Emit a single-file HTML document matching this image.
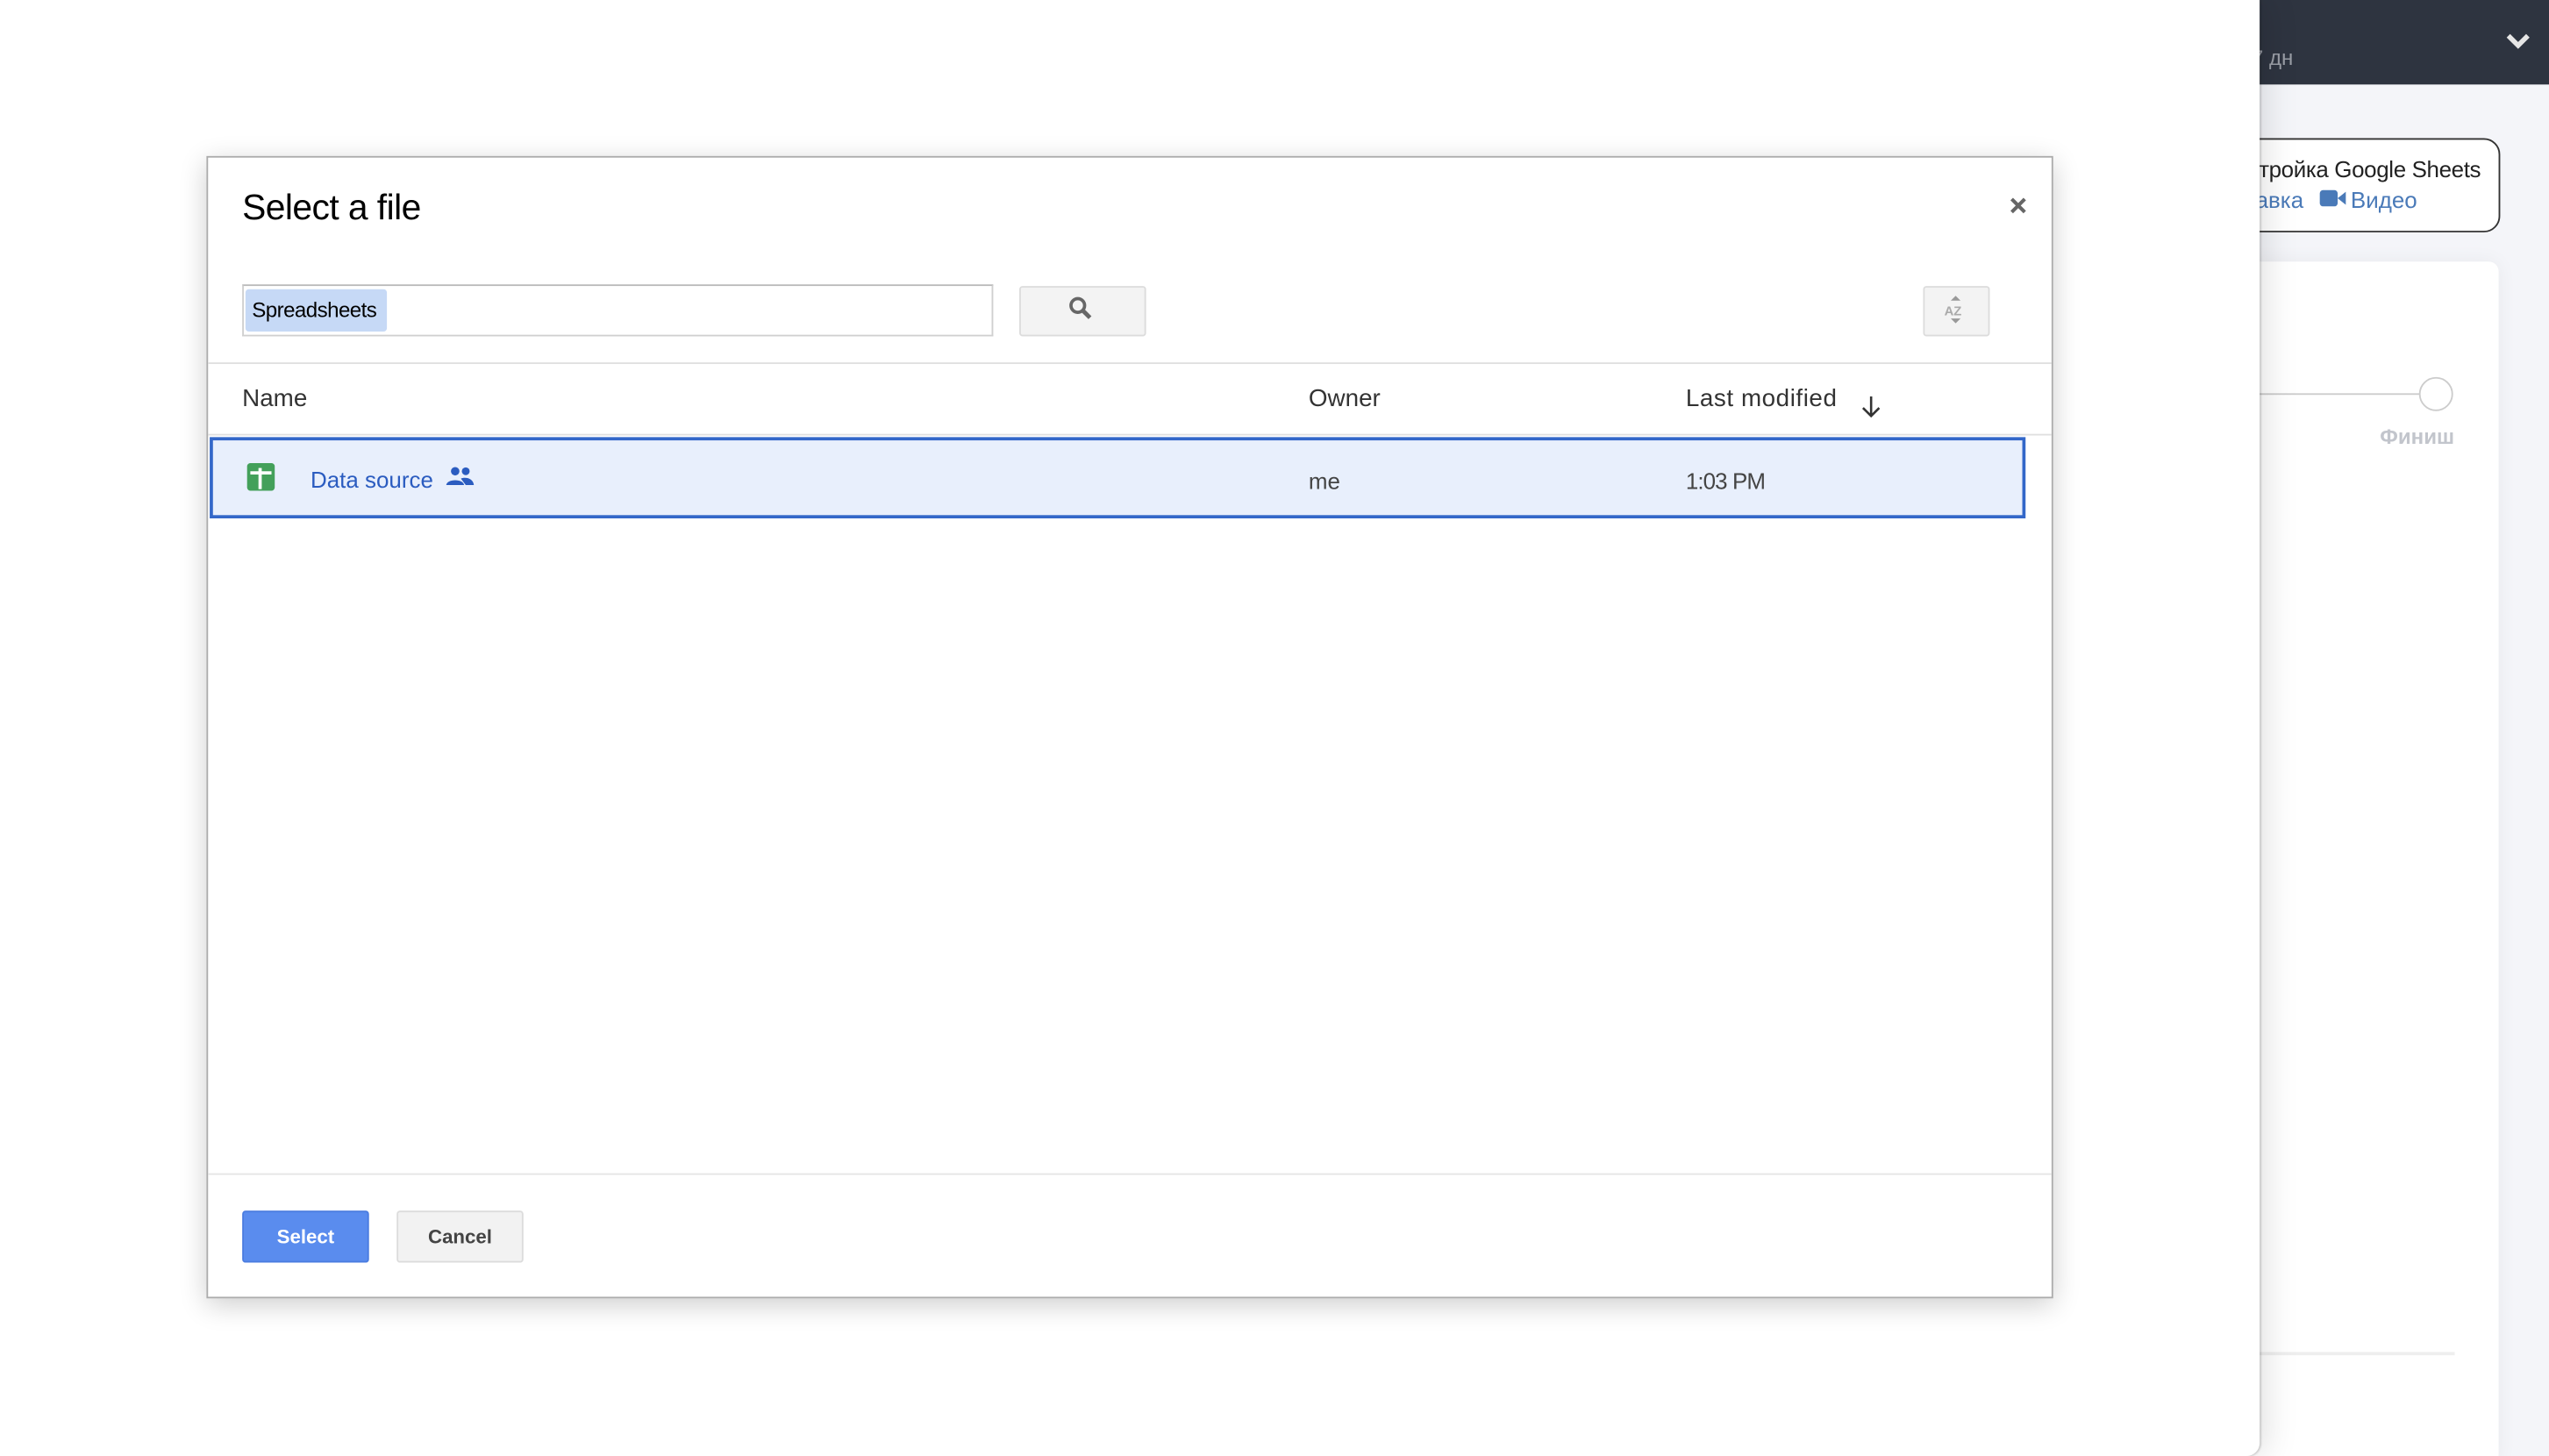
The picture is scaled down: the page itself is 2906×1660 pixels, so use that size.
<!DOCTYPE html>
<html><head><meta charset="utf-8">
<style>
html,body{margin:0;padding:0;width:2906px;height:1660px;overflow:hidden;background:#fff;}
#s{position:absolute;left:0;top:0;width:1568px;height:896px;transform:scale(1.85332,1.85268);transform-origin:0 0;font-family:"Liberation Sans",Arial,sans-serif;overflow:hidden;}
.a{position:absolute;}
</style></head><body><div id="s">
<!-- right panel -->
<div class="a" style="left:1300px;top:0;width:268px;height:896px;background:#f4f5f9;"></div>
<div class="a" style="left:1300px;top:0;width:268px;height:52px;background:#2e3440;"></div>
<div class="a" style="left:1385px;top:28px;font-size:13px;color:#9a9ea6;">7 дн</div>
<svg class="a" style="left:1541px;top:18px" width="16" height="14" viewBox="0 0 16 14"><path d="M2 4 L8 10 L14 4" stroke="#e6e6e6" stroke-width="3" fill="none"/></svg>
<div class="a" style="left:1300px;top:85px;width:236px;height:56px;border:1px solid #333;border-radius:10px;background:#fff;"></div>
<div class="a" style="left:1300px;top:96px;width:226px;text-align:right;font-size:14px;color:#222;white-space:nowrap;letter-spacing:-0.2px;">Настройка Google Sheets</div>
<div class="a" style="left:1300px;top:115px;width:117px;text-align:right;font-size:14px;color:#4a7ab8;white-space:nowrap;">Справка</div>
<div class="a" style="left:1427px;top:117px;width:11px;height:10px;background:#4a7ab8;border-radius:2px;"></div>
<div class="a" style="left:1438px;top:118px;width:0;height:0;border-top:4px solid transparent;border-bottom:4px solid transparent;border-right:5px solid #4a7ab8;"></div>
<div class="a" style="left:1446px;top:115px;font-size:14px;color:#4a7ab8;white-space:nowrap;">Видео</div>
<div class="a" style="left:1300px;top:161px;width:237px;height:740px;background:#fff;border-radius:6px;box-shadow:0 0 12px rgba(0,0,0,.05);"></div>
<div class="a" style="left:1300px;top:242px;width:189px;height:1px;background:#ccc;"></div>
<div class="a" style="left:1488px;top:232px;width:19px;height:19px;border:1.5px solid #ccc;border-radius:50%;background:#fff;"></div>
<div class="a" style="left:1464px;top:261px;font-size:13px;font-weight:bold;color:#c2c5cc;">Финиш</div>
<div class="a" style="left:1300px;top:832px;width:210px;height:2px;background:#eee;"></div>
<!-- main page -->
<div class="a" style="left:0;top:0;width:1390px;height:896px;background:#fff;border-bottom-right-radius:8px;box-shadow:4px 0 20px rgba(0,0,0,.12),1px 0 1px rgba(0,0,0,.15);"></div>
<!-- dialog -->
<div class="a" style="left:127px;top:96px;width:1134px;height:701px;border:1px solid #acacac;background:#fff;box-shadow:0 4px 16px rgba(0,0,0,.2);"></div>
<div class="a" style="left:149px;top:115px;font-size:22px;color:#000;letter-spacing:-0.3px;">Select a file</div>
<svg class="a" style="left:1236px;top:121px" width="11" height="11" viewBox="0 0 11 11"><path d="M1.5 1.5 L9.5 9.5 M9.5 1.5 L1.5 9.5" stroke="#666" stroke-width="2.2"/></svg>
<div class="a" style="left:149px;top:175px;width:460px;height:30px;border:1px solid #d0d0d0;border-top-color:#bbb;background:#fff;"></div>
<div class="a" style="left:151px;top:178px;width:87px;height:26px;background:#c6d9f6;border-radius:2px;"></div>
<div class="a" style="left:155px;top:183px;font-size:13px;color:#000;letter-spacing:-0.3px;">Spreadsheets</div>
<div class="a" style="left:627px;top:176px;width:76px;height:29px;border:1px solid #dcdcdc;border-radius:2px;background:#f3f3f3;"></div>
<svg class="a" style="left:657px;top:182px" width="16" height="16" viewBox="0 0 16 16"><circle cx="6" cy="6" r="4.2" stroke="#666" stroke-width="2" fill="none"/><path d="M9 9 L13.5 13.5" stroke="#666" stroke-width="2.6"/></svg>
<div class="a" style="left:1183px;top:176px;width:39px;height:29px;border:1px solid #dcdcdc;border-radius:2px;background:#f3f3f3;"></div>
<svg class="a" style="left:1194px;top:180px" width="18" height="22" viewBox="0 0 18 22"><path d="M6 5 L9 2 L12 5Z M6 16 L9 19 L12 16Z" fill="#999"/><text x="2" y="14" font-family="Liberation Sans" font-size="8" font-weight="bold" fill="#aaa">AZ</text></svg>
<div class="a" style="left:128px;top:223px;width:1134px;height:1px;background:#e0e0e0;"></div>
<div class="a" style="left:149px;top:237px;font-size:15px;color:#333;">Name</div>
<div class="a" style="left:805px;top:237px;font-size:15px;color:#333;">Owner</div>
<div class="a" style="left:1037px;top:237px;font-size:15px;color:#333;letter-spacing:0.3px;">Last modified</div>
<svg class="a" style="left:1144px;top:242px" width="14" height="16" viewBox="0 0 14 16"><path d="M7 2 V14 M2 9 L7 14 L12 9" stroke="#333" stroke-width="1.4" fill="none"/></svg>
<div class="a" style="left:128px;top:267px;width:1134px;height:1px;background:#e0e0e0;"></div>
<div class="a" style="left:129px;top:269px;width:1113px;height:46px;background:#e8effc;border:2px solid #3367c9;"></div>
<div class="a" style="left:152px;top:285px;width:17px;height:17px;background:#43a05a;border-radius:2px;"></div>
<div class="a" style="left:159px;top:288px;width:2px;height:13px;background:#fff;"></div>
<div class="a" style="left:154px;top:290px;width:13px;height:2px;background:#fff;"></div>
<div class="a" style="left:191px;top:287px;font-size:14px;color:#2b5cc0;">Data source</div>
<svg class="a" style="left:274px;top:286px" width="18" height="14" viewBox="0 0 18 14"><circle cx="6" cy="4" r="2.6" fill="#2b5cc0"/><circle cx="12.5" cy="4" r="2.4" fill="#2b5cc0"/><path d="M0.5 12.5 C1 8.5 11 8.5 11.5 12.5Z M9.5 8.5 C12 7.5 17 8 17.5 12.5 H12.5Z" fill="#2b5cc0"/></svg>
<div class="a" style="left:805px;top:288px;font-size:14px;color:#444;">me</div>
<div class="a" style="left:1037px;top:288px;font-size:14px;color:#444;letter-spacing:-0.5px;">1:03 PM</div>
<div class="a" style="left:128px;top:722px;width:1134px;height:1px;background:#e5e5e5;"></div>
<div class="a" style="left:149px;top:745px;width:76px;height:30px;background:#5a8cee;border:1px solid #4a7ce0;border-radius:2px;color:#fff;font-size:12px;font-weight:bold;text-align:center;line-height:30px;">Select</div>
<div class="a" style="left:244px;top:745px;width:76px;height:30px;background:#f2f2f2;border:1px solid #dcdcdc;border-radius:2px;color:#444;font-size:12px;font-weight:bold;text-align:center;line-height:30px;">Cancel</div>
</div></body></html>
